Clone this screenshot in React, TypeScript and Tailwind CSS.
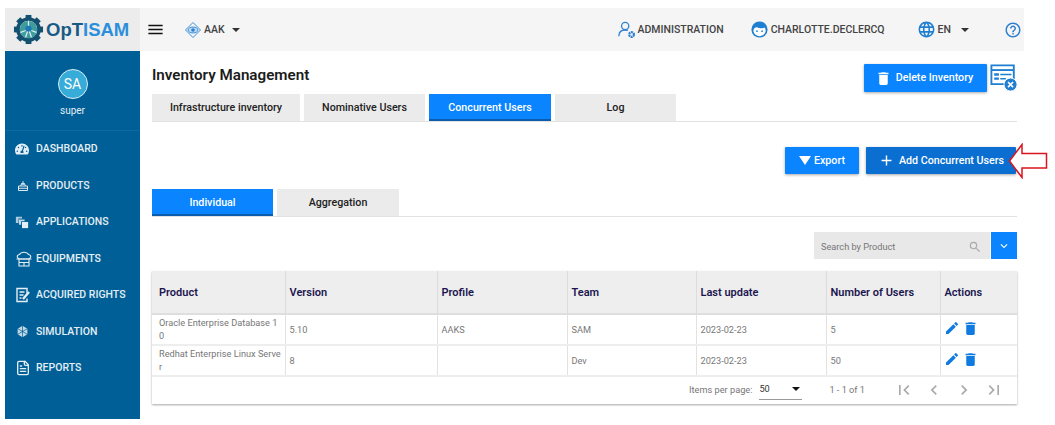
import { FaTachometerAlt } from "react-icons/fa";
import { MdAdd, MdChevronLeft, MdChevronRight, MdDelete, MdEdit, MdExpandMore, MdFirstPage, MdHelpOutline, MdLanguage, MdLastPage, MdMenu, MdSearch } from "react-icons/md";
import { LuFileText } from "react-icons/lu";

const font = { fontFamily: "Roboto, 'Liberation Sans', sans-serif" };

function Logo() {
  const teeth = [0, 45, 90, 135, 180, 225, 270, 315];
  return (
    <svg width="31" height="31" viewBox="0 0 32 32" className="shrink-0">
      {teeth.map((a) => (
        <rect key={a} x="13" y="1" width="6" height="6" fill="#14506f" transform={`rotate(${a} 16 16)`} />
      ))}
      <circle cx="16" cy="16" r="11" fill="none" stroke="#14506f" strokeWidth="3.5" />
      <circle cx="16" cy="16" r="9" fill="#3f9c9c" />
      <circle cx="16" cy="15" r="3.2" fill="#1d78b8" />
      <path d="M16 7v5M8 19l5-2M24 19l-5-2M13 24l2-6M19 24l-2-6" stroke="#dbeef2" strokeWidth="1.3" />
    </svg>
  );
}

function Caret() {
  return <span className="inline-block w-0 h-0 border-l-[4px] border-r-[4px] border-t-[4px] border-l-transparent border-r-transparent border-t-[#333]" />;
}

function ProductsIcon() {
  return (
    <svg width="12" height="12" viewBox="0 0 16 16" fill="none" stroke="currentColor" strokeWidth="1.3" className="ml-[2px]">
      <path d="M2 8h12v6H2zM2 11h12M5 8l1-3h4l1 3M8 1.5v5M6 4l2 2 2-2" />
    </svg>
  );
}

function AppsIcon() {
  return (
    <svg width="14" height="14" viewBox="0 0 16 16" fill="currentColor">
      <path d="M1 2h7v2H4v5H1z" opacity=".75" />
      <path d="M4.5 5H11v2H7v4H4.5z" opacity=".85" />
      <path d="M8 8h7v7H8z" />
    </svg>
  );
}

function EquipIcon() {
  return (
    <svg width="18" height="18" viewBox="0 0 18 18" fill="none" stroke="currentColor" strokeWidth="1.1">
      <path d="M5 9C2 9 1 5 4.500 4.500 6 1.500 12 1.500 13.500 4.500 17 5 16 9 13 9z" />
      <path d="M1.500 9h15M4 9v7h10V9M4 12.500h10M9 12.500V16" />
    </svg>
  );
}

function RightsIcon() {
  return (
    <svg width="16" height="16" viewBox="0 0 16 16" fill="none" stroke="currentColor" strokeWidth="1.4">
      <path d="M12 6V1.500H2v13h10v-3" />
      <path d="M4.500 5h5M4.500 8h4M4.500 11h2" />
      <path d="M8 12l6-7" strokeWidth="2.4" />
    </svg>
  );
}

function SimIcon() {
  return (
    <svg width="13" height="13" viewBox="0 0 16 16" fill="currentColor" className="ml-[1px]">
      <path d="M8 1l6 3.500v7L8 15l-6-3.500v-7z" opacity=".85" />
      <path d="M8 1v14M2 4.500l12 7M14 4.500l-12 7" stroke="#005f96" strokeWidth=".9" />
    </svg>
  );
}

function AdminIcon() {
  return (
    <svg width="20" height="20" viewBox="0 0 22 22" fill="none" stroke="#2f80d0" strokeWidth="1.4">
      <circle cx="9" cy="6.500" r="4" />
      <path d="M2 18c0-5 3-7 7-7 1 0 2 .2 3 .5" />
      <circle cx="16" cy="16" r="2.600" strokeWidth="2.400" strokeDasharray="2 .6" />
    </svg>
  );
}

function UserFace() {
  return (
    <svg width="17" height="17" viewBox="0 0 20 20">
      <circle cx="10" cy="10" r="9.500" fill="#1f7fd0" />
      <path d="M2.800 12c0-3.500 2.500-5 4.700-4.500C10 9 14 8.500 16 7.500c1.200 1.200 1.300 3 1.200 4.500-.7 3.500-3.700 5.800-7.200 5.800S3.500 15.500 2.800 12z" fill="#fff" />
      <circle cx="7" cy="12" r="1" fill="#1f7fd0" />
      <circle cx="13" cy="12" r="1" fill="#1f7fd0" />
    </svg>
  );
}

function TenantIcon() {
  return (
    <svg width="16" height="16" viewBox="0 0 16 16" fill="none">
      <path d="M8 .5L15.500 8 8 15.500.5 8z" stroke="#3a8fd8" strokeWidth="1" />
      <ellipse cx="8" cy="8" rx="5" ry="3" fill="#bcd9f2" stroke="#3a8fd8" />
      <circle cx="8" cy="8" r="1.800" fill="#2f80d0" />
    </svg>
  );
}

function InventoryRemoveIcon() {
  return (
    <svg width="28" height="28" viewBox="0 0 30 30" fill="none">
      <path d="M1.500 1.500h24v20h-24z" stroke="#1f7fd0" strokeWidth="2" fill="#fff" />
      <path d="M1.500 6.500h24" stroke="#1f7fd0" strokeWidth="2" />
      <path d="M4.500 10h5v2.500h-5zM4.500 14.500h5V17h-5z" fill="#1f7fd0" />
      <path d="M11 11.300h12M11 15.800h6" stroke="#1f7fd0" strokeWidth="1.500" />
      <circle cx="22" cy="22" r="7" fill="#1f7fd0" stroke="#fff" />
      <path d="M19.300 19.300l5.400 5.400M24.700 19.300l-5.400 5.400" stroke="#fff" strokeWidth="1.800" />
    </svg>
  );
}

const navItems = [
  { label: "DASHBOARD", icon: <FaTachometerAlt size={14} /> },
  { label: "PRODUCTS", icon: <ProductsIcon /> },
  { label: "APPLICATIONS", icon: <AppsIcon /> },
  { label: "EQUIPMENTS", icon: <EquipIcon /> },
  { label: "ACQUIRED RIGHTS", icon: <RightsIcon /> },
  { label: "SIMULATION", icon: <SimIcon /> },
  { label: "REPORTS", icon: <LuFileText size={16} /> },
];

const rows = [
  { product: ["Oracle Enterprise Database 1", "0"], version: "5.10", profile: "AAKS", team: "SAM", updated: "2023-02-23", users: "5" },
  { product: ["Redhat Enterprise Linux Serve", "r"], version: "8", profile: "", team: "Dev", updated: "2023-02-23", users: "50" },
];

const headers = ["Product", "Version", "Profile", "Team", "Last update", "Number of Users", "Actions"];
const colClasses = ["w-[133px]", "w-[152px]", "w-[130px]", "w-[129px]", "w-[130px]", "w-[114px]", "w-[77px]"];

function Tab({ label, active, width }: { label: string; active?: boolean; width: string }) {
  return (
    <div className={`${width} h-full flex items-center justify-center text-[10.700px] font-medium ${active ? "pt-[3px] bg-[#0a84ff] text-white border-b-2 border-[#0b5cad]" : "pt-[1px] bg-[#ebebeb] text-[#222]"}`}>
      {label}
    </div>
  );
}

export default function App() {
  return (
    <div style={font} className="w-[1055px] h-[425px] overflow-hidden bg-white pl-[5px] pt-[8px] relative">
      {/* Top bar */}
      <div className="w-[1019px] h-[43px] flex bg-[#f5f5f5]">
        <div className="w-[135px] bg-[#ececec] flex items-center pl-[8px] gap-[2px]">
          <Logo />
          <span className="text-[18.500px] font-bold" style={{ fontFamily: "'Liberation Sans', sans-serif" }}>
            <span className="text-[#175a85]">OpT</span>
            <span className="text-[#2b8fdc]">ISAM</span>
          </span>
        </div>
        <div className="flex-1 flex items-center text-[10.500px] font-medium text-[#444]">
          <MdMenu size={19} className="ml-[6px] text-[#111]" />
          <div className="ml-[20px] flex items-center gap-[3px]">
            <TenantIcon />
            <span>AAK</span>
            <span className="ml-[4px] flex"><Caret /></span>
          </div>
          <div className="ml-auto flex items-center gap-[1px]">
            <AdminIcon />
            <span>ADMINISTRATION</span>
          </div>
          <div className="ml-[27px] flex items-center gap-[3px]">
            <UserFace />
            <span>CHARLOTTE.DECLERCQ</span>
          </div>
          <div className="ml-[32px] flex items-center gap-[2px]">
            <MdLanguage size={19} className="text-[#1f7fd0]" />
            <span>EN</span>
            <span className="ml-[8px] flex"><Caret /></span>
          </div>
          <MdHelpOutline size={18} className="ml-[35px] mr-[2px] text-[#2f80d0]" />
        </div>
      </div>

      <div className="flex w-[1019px] h-[368px]">
        {/* Sidebar */}
        <aside className="w-[135px] bg-[#005f96] text-[#e4eef5] shrink-0">
          <div className="h-[80px] flex flex-col items-center pt-[18px] border-b border-[#0c6aa0]">
            <div className="w-[30px] h-[30px] rounded-full bg-[#38acd8] border border-[#d8eef7] flex items-center justify-center text-white text-[14px]">SA</div>
            <div className="mt-[4px] text-[10px]">super</div>
          </div>
          <nav className="flex flex-col">
            {navItems.map((item) => (
              <div key={item.label} className="h-[36.500px] flex items-center text-[10.500px] font-medium">
                <span className="w-[31px] pl-[10px] flex justify-start">{item.icon}</span>
                <span>{item.label}</span>
              </div>
            ))}
          </nav>
        </aside>

        {/* Main */}
        <main className="flex-1 pl-[12px] pr-[7px]">
          <div className="h-[43px] flex items-start justify-between pt-[13px]">
            <h1 className="text-[15.200px] font-semibold text-[#1c1c1c] leading-[22px]">Inventory Management</h1>
            <div className="flex items-start gap-[3px] -mr-[1px]">
              <button className="w-[123px] h-[28px] pr-[3px] bg-[#0a84ff] text-white text-[10.700px] font-medium flex items-center justify-center gap-[4px] rounded-[1px] shadow-[0_1px_3px_rgba(0,0,0,0.35)]">
                <MdDelete size={17} />
                <span className="pt-[1px]">Delete Inventory</span>
              </button>
              <InventoryRemoveIcon />
            </div>
          </div>

          <div className="h-[28px] flex gap-[4px] border-b border-[#e2e2e2]">
            <Tab label="Infrastructure inventory" width="w-[148px]" />
            <Tab label="Nominative Users" width="w-[121px]" />
            <Tab label="Concurrent Users" width="w-[122px]" active />
            <Tab label="Log" width="w-[121px]" />
          </div>

          <div className="mt-[25px] flex justify-end gap-[7px] pr-[1px] text-white text-[10.700px] font-medium">
            <button className="w-[74px] h-[27px] bg-[#0a84ff] flex items-center justify-center gap-[3px] rounded-[1px] shadow-[0_1px_3px_rgba(0,0,0,0.35)]">
              <span className="w-0 h-0 border-l-[6px] border-r-[6px] border-t-[9px] border-l-transparent border-r-transparent border-t-white" />
              <span className="pt-[1px]">Export</span>
            </button>
            <button className="w-[150px] h-[27px] bg-[#0b6fd1] flex items-center justify-center gap-[4px] rounded-[1px] shadow-[0_1px_3px_rgba(0,0,0,0.35)]">
              <MdAdd size={17} />
              <span className="pt-[1px]">Add Concurrent Users</span>
            </button>
          </div>

          <div className="mt-[15px] h-[28px] flex gap-[4px] border-b border-[#e2e2e2]">
            <Tab label="Individual" width="w-[121px]" active />
            <Tab label="Aggregation" width="w-[122px]" />
          </div>

          <div className="mt-[15px] flex justify-end gap-[1px]">
            <div className="w-[176px] h-[27px] pt-[2px] bg-[#e8e8e8] flex items-center justify-between pl-[7px] pr-[8px] text-[9.200px] text-[#777]">
              <span>Search by Product</span>
              <MdSearch size={14} className="text-[#aaa]" />
            </div>
            <div className="w-[26px] h-[27px] bg-[#0a84ff] flex items-center justify-center text-white">
              <MdExpandMore size={14} />
            </div>
          </div>

          {/* Table */}
          <div className="mt-[12px] w-[865px] shadow-[0_1px_2px_rgba(0,0,0,0.35)]">
            <table className="w-full table-fixed border-collapse">
              <thead>
                <tr className="h-[43px] bg-[#eeeeee]">
                  {headers.map((h, i) => (
                    <th key={h} className={`${colClasses[i]} text-left align-middle ${i === 0 ? "pl-[7px]" : "pl-[4px]"} pr-0 pt-[2px] text-[11px] font-semibold text-[#1c1650] border-b-2 border-[#dedede] ${i < 6 ? "border-r border-r-[#dcdcdc]" : ""}`}>
                      {h}
                    </th>
                  ))}
                </tr>
              </thead>
              <tbody className="text-[9.200px] text-[#777] leading-[13px]">
                {rows.map((r) => (
                  <tr key={r.updated + r.users} className="h-[31px] border-b-2 border-[#eeeeee]">
                    <td className="pl-[7px] pb-[1px] leading-[13.500px] whitespace-nowrap border-r border-[#e2e2e2]">
                      {r.product[0]}
                      <br />
                      {r.product[1]}
                    </td>
                    <td className="pl-[4px] border-r border-[#e2e2e2]">{r.version}</td>
                    <td className="pl-[4px] border-r border-[#e2e2e2]">{r.profile}</td>
                    <td className="pl-[4px] border-r border-[#e2e2e2]">{r.team}</td>
                    <td className="pl-[4px] border-r border-[#e2e2e2]">{r.updated}</td>
                    <td className="pl-[4px] border-r border-[#e2e2e2]">{r.users}</td>
                    <td className="pl-[3px]">
                      <div className="flex items-center gap-[2px] text-[#0f7be0] -mt-[3px]">
                        <MdEdit size={16} />
                        <MdDelete size={17} />
                      </div>
                    </td>
                  </tr>
                ))}
              </tbody>
            </table>
            <div className="h-[27px] pb-[2px] flex items-center justify-end text-[9.200px] text-[#777]">
              <span>Items per page:</span>
              <div className="ml-[7px] w-[43px] h-[20px] border-b border-[#999] flex items-center justify-between pl-0 pr-[2px] text-[#333]">
                <span>50</span>
                <span className="w-0 h-0 border-l-[4px] border-r-[4px] border-t-[4px] border-l-transparent border-r-transparent border-t-[#111]" />
              </div>
              <span className="ml-[27px]">1 - 1 of 1</span>
              <div className="ml-[29px] mr-[13px] flex items-center gap-[10px] text-[#aaa]">
                <MdFirstPage size={20} />
                <MdChevronLeft size={20} />
                <MdChevronRight size={20} />
                <MdLastPage size={20} />
              </div>
            </div>
          </div>
        </main>
      </div>

      {/* Red annotation arrow */}
      <svg width="40" height="36" viewBox="0 0 40 36" className="absolute left-[1008px] top-[143px]">
        <path d="M1.500 18L14 1.500V10.500H38.500V25H14V34.500z" fill="#fff" stroke="#d9141e" strokeWidth="1.500" />
      </svg>
    </div>
  );
}
